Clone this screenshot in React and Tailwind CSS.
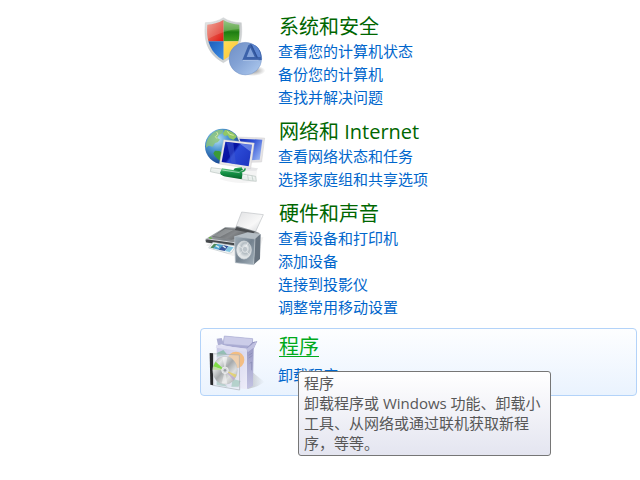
function SecurityIcon() {
  return (
    <svg viewBox="18 15 204 204" className="h-[68px] w-[68px] shrink-0" aria-hidden="true">
      <defs>
        <clipPath id="shield">
          <path d="M82 36 C96 45 113 49 130 50 C133 85 131 129 82 157 C35 129 31 85 34 50 C51 49 68 45 82 36Z" />
        </clipPath>
        <linearGradient id="rim" x2="1" y2="1">
          <stop stopColor="#e6e8e8" />
          <stop offset=".5" stopColor="#c6cacb" />
          <stop offset="1" stopColor="#dfe1e2" />
        </linearGradient>
        <linearGradient id="red" x2="1" y2="1">
          <stop stopColor="#f0a396" />
          <stop offset=".5" stopColor="#e55a4b" />
          <stop offset="1" stopColor="#e01410" />
        </linearGradient>
        <linearGradient id="green" x2="0" y2="1">
          <stop stopColor="#8fc47c" />
          <stop offset=".5" stopColor="#4b9c33" />
          <stop offset=".6" stopColor="#1d7d12" />
          <stop offset="1" stopColor="#45a01f" />
        </linearGradient>
        <linearGradient id="blue" x2="1" y2="1">
          <stop stopColor="#1c58b5" />
          <stop offset="1" stopColor="#3f93ea" />
        </linearGradient>
        <linearGradient id="yellow" x2="1" y2="1">
          <stop stopColor="#ffdc55" />
          <stop offset="1" stopColor="#f9bf35" />
        </linearGradient>
        <linearGradient id="disc" x2="1" y2="1">
          <stop stopColor="#6f8fc6" />
          <stop offset=".45" stopColor="#84a3d5" />
          <stop offset="1" stopColor="#b2cdf1" />
        </linearGradient>
        <radialGradient id="shade">
          <stop stopColor="#555" stopOpacity=".65" />
          <stop offset="1" stopColor="#555" stopOpacity="0" />
        </radialGradient>
      </defs>
      <ellipse cx="170" cy="188" rx="38" ry="16" fill="url(#shade)" />
      <path
        d="M82 29 C97 39 115 44 136 44 C140 87 138 134 82 164 C27 134 24 87 28 44 C49 44 67 39 82 29Z"
        fill="url(#rim)"
        stroke="#bcc0c1"
        strokeWidth="1"
      />
      <g clipPath="url(#shield)">
        <rect x="28" y="30" width="55" height="70" fill="url(#red)" />
        <rect x="83" y="30" width="55" height="70" fill="url(#green)" />
        <rect x="28" y="100" width="55" height="66" fill="url(#blue)" />
        <rect x="83" y="100" width="55" height="66" fill="url(#yellow)" />
        <path d="M28 30H138V62C105 63 67 75 28 98Z" fill="#fff" opacity=".16" />
      </g>
      <circle cx="148" cy="152" r="49" fill="url(#disc)" stroke="#6482b6" strokeWidth="1" />
      <path d="M164 107 C186 112 198 130 197 156 L187 157 L139 156 L157 112Z" fill="#3c62aa" />
      <path d="M166 108 C183 113 193 128 194 147 L184 147Z" fill="#5d86d0" />
      <path d="M163 119L152 147H176Z" fill="#83a3da" />
      <path d="M166 112L184 149" fill="none" stroke="#2f5298" strokeWidth="4" />
      <path d="M141 157H188" fill="none" stroke="#c4d6f2" strokeWidth="2" />
    </svg>
  );
}

function NetworkIcon() {
  return (
    <svg viewBox="18 0 204 204" className="h-[68px] w-[68px] shrink-0" aria-hidden="true">
      <defs>
        <radialGradient id="globe" cx=".35" cy=".3" r=".75">
          <stop stopColor="#b9e2f7" />
          <stop offset=".4" stopColor="#4f98d2" />
          <stop offset="1" stopColor="#0d3a8a" />
        </radialGradient>
        <linearGradient id="screen" x2="1" y2=".6">
          <stop stopColor="#2b49d2" />
          <stop offset=".2" stopColor="#0a17a8" />
          <stop offset=".45" stopColor="#0713a2" />
          <stop offset=".52" stopColor="#2b4ad6" />
          <stop offset="1" stopColor="#2039c4" />
        </linearGradient>
        <linearGradient id="screenBack" x2="1" y2=".6">
          <stop stopColor="#152bb4" />
          <stop offset=".5" stopColor="#2f50d4" />
          <stop offset="1" stopColor="#8ba8f0" />
        </linearGradient>
        <linearGradient id="cable" x2="0" y2="1">
          <stop stopColor="#67c983" />
          <stop offset=".4" stopColor="#159347" />
          <stop offset="1" stopColor="#066329" />
        </linearGradient>
      </defs>
      <path d="M70 183Q130 202 180 190L184 151L145 147Z" fill="#777" opacity=".08" />
      <circle cx="80" cy="85" r="53" fill="url(#globe)" />
      <path d="M45 51C55 36 73 33 82 36L79 46L69 50L64 59L72 65L65 73L57 75L50 86L38 83L30 89C30 72 34 61 45 51Z" fill="#8cc476" opacity=".8" />
      <path d="M87 35C104 38 116 45 123 56L112 65L100 60L95 52L86 54L80 47Z" fill="#91c765" />
      <path d="M57 98L70 99L82 107L91 121L84 136C72 131 57 117 52 106Z" fill="#3b9b36" />
      <path d="M62 42L66 49L58 56L63 62M94 40L101 49L113 52" fill="none" stroke="#d5e8a0" strokeWidth="3" />
      <path d="M124 57L206 60L197 132L157 133Z" fill="#e5e3e5" stroke="#c3c2c6" strokeWidth="1" />
      <path d="M130 62L199 65L191 125L157 127Z" fill="url(#screenBack)" />
      <path d="M139 145L186 151L181 158L145 158Z" fill="#e6e6e8" />
      <path d="M83 65L175 75L164 152L70 138Z" fill="#e9e7e7" stroke="#c1c0c4" strokeWidth="1" />
      <path d="M88 71L168 80L158 145L77 132Z" fill="url(#screen)" />
      <path d="M92 73L112 75L120 139L107 137Z" fill="#4059d0" opacity=".55" />
      <path d="M132 77L168 80L165 102Z" fill="#a9c0fb" opacity=".45" />
      <path d="M116 151L137 147L141 156L126 161L111 158Z" fill="url(#cable)" />
      <path d="M108 162Q148 166 147 151" fill="none" stroke="#299950" strokeWidth="5" />
      <path d="M45 149L79 153L76 168L43 161Z" fill="#e8eeeb" stroke="#b9c4bf" strokeWidth="2" />
      <path d="M134 167L179 175L181 190L139 185Z" fill="#e9eeec" stroke="#b9c4bf" strokeWidth="2" />
      <path d="M78 151L130 159Q140 161 139 171L137 184L91 176Q75 173 72 164Z" fill="url(#cable)" />
      <path d="M79 156L131 164M48 153L72 156M142 172L174 178" stroke="#fff" strokeWidth="3" opacity=".5" />
      <path d="M155 171L157 186M168 173L171 188" stroke="#b7c6bf" strokeWidth="2" />
    </svg>
  );
}

function HardwareIcon() {
  return (
    <svg viewBox="18 0 204 204" className="h-[68px] w-[68px] shrink-0" aria-hidden="true">
      <defs>
        <linearGradient id="paper" x2="1" y2="1">
          <stop stopColor="#dfe0e2" />
          <stop offset=".6" stopColor="#f8f8f8" />
          <stop offset="1" stopColor="#cdd0d3" />
        </linearGradient>
        <linearGradient id="printer" x2="1" y2="1">
          <stop stopColor="#bfc3c6" />
          <stop offset=".5" stopColor="#7f8488" />
          <stop offset="1" stopColor="#d3d5d7" />
        </linearGradient>
        <linearGradient id="lid" x2="1" y2=".4">
          <stop stopColor="#4b4e50" />
          <stop offset=".6" stopColor="#85888b" />
          <stop offset="1" stopColor="#55585b" />
        </linearGradient>
        <linearGradient id="speaker" x2="1" y2="1">
          <stop stopColor="#9fabb5" />
          <stop offset=".5" stopColor="#74828f" />
          <stop offset="1" stopColor="#a6b3bd" />
        </linearGradient>
        <radialGradient id="cone" cx=".6" cy=".4">
          <stop stopColor="#9fa9b0" />
          <stop offset=".25" stopColor="#e9edf0" />
          <stop offset=".6" stopColor="#b4bdc3" />
          <stop offset="1" stopColor="#e1e5e7" />
        </radialGradient>
      </defs>
      <path d="M30 136L110 168L190 153L202 112L65 112Z" fill="#777" opacity=".1" />
      <path d="M137 36L202 44L176 101L116 91Z" fill="url(#paper)" stroke="#c0c3c6" strokeWidth="2" />
      <path d="M88 81L118 83L122 77L178 94L190 99L192 110L110 143L31 127L27 120L34 114Z" fill="url(#printer)" />
      <path d="M86 84L119 87L175 100L106 119L68 113L48 111Z" fill="url(#lid)" />
      <path d="M122 81L177 95L172 100L116 90Z" fill="#4a4d50" />
      <path d="M87 87L50 109L72 111L112 90Z" fill="#b9bcbe" opacity=".45" />
      <path d="M32 116L115 126V141L29 127Z" fill="#44484b" />
      <path d="M29 116L117 128L118 137" fill="none" stroke="#d5d8db" strokeWidth="3" />
      <path d="M39 113L47 115" stroke="#63ba38" strokeWidth="4" />
      <path d="M51 127L119 138L107 158L95 160L38 144Z" fill="#f5f7f8" stroke="#bdc5c9" strokeWidth="2" />
      <path d="M54 131L66 133L53 145L43 143Z" fill="#4d8a5a" />
      <path d="M64 132L83 135L68 149L51 145Z" fill="#4fa5cf" />
      <path d="M81 135L98 139L86 153L68 149Z" fill="#35539b" />
      <path d="M97 139L113 142L101 156L87 153Z" fill="#80c4e0" />
      <path d="M80 137L89 144M59 137L69 142" stroke="#dff1ee" strokeWidth="4" />
      <path d="M116 109L155 97L194 102L177 117Z" fill="#b4bdc4" />
      <path d="M177 117L194 102L192 177L173 194Z" fill="#66727e" />
      <path d="M116 109L177 117L173 194L118 188Z" fill="url(#speaker)" stroke="#b9c3ca" strokeWidth="2" />
      <ellipse cx="144" cy="150" rx="22" ry="27" fill="url(#cone)" stroke="#dce1e4" strokeWidth="2" />
      <ellipse cx="147" cy="148" rx="8" ry="9" fill="#bcc4ca" stroke="#e7eaec" strokeWidth="2" />
      <path d="M128 137L139 145M127 165L139 154M156 128L149 141M160 164L152 155" stroke="#fff" strokeWidth="3" opacity=".5" />
    </svg>
  );
}

function ProgramsIcon() {
  return (
    <svg viewBox="18 33 204 180" className="h-[60px] w-[68px] shrink-0" aria-hidden="true">
      <defs>
        <linearGradient id="front" x2="1" y2="1">
          <stop stopColor="#c6c7e6" />
          <stop offset="1" stopColor="#eeedf9" />
        </linearGradient>
        <linearGradient id="side" x2="0" y2="1">
          <stop stopColor="#9293bf" />
          <stop offset="1" stopColor="#c3c3e2" />
        </linearGradient>
        <linearGradient id="cd" x2="1" y2="1">
          <stop stopColor="#a0a2a4" />
          <stop offset=".25" stopColor="#e4e6e6" />
          <stop offset=".48" stopColor="#a5a9ab" />
          <stop offset=".7" stopColor="#dedfdf" />
          <stop offset="1" stopColor="#a3a6a8" />
        </linearGradient>
        <linearGradient id="boxShadow" x2="1">
          <stop stopColor="#777" stopOpacity=".4" />
          <stop offset="1" stopColor="#777" stopOpacity="0" />
        </linearGradient>
      </defs>
      <path d="M169 150L188 166L206 180L184 193L155 201Z" fill="url(#boxShadow)" />
      <path d="M85 42L170 50L173 78L152 84L79 69Z" fill="#a9aad2" />
      <path d="M85 42L170 50L169 73L82 66Z" fill="#cbcce8" stroke="#aeb0d4" strokeWidth="2" />
      <path d="M62 50L77 48L84 66L66 70Z" fill="#adafd4" />
      <path d="M152 79L169 61L184 57L173 80L171 191L153 201Z" fill="url(#side)" />
      <path d="M62 69L152 80L153 202L62 190Z" fill="url(#front)" />
      <path d="M62 69L152 80L147 89L59 77Z" fill="#dfdff2" />
      <path d="M152 80L172 64L183 58L175 76L155 91Z" fill="#bfc0e0" />
      <path d="M158 100L169 93M158 108L169 101M161 124L167 120V145" fill="none" stroke="#8486b2" strokeWidth="2" />
      <circle cx="120" cy="114" r="25" fill="#f3bd82" />
      <path d="M64 92L82 84L94 98L62 104ZM110 170L133 177L128 194H106Z" fill="#8cbcae" opacity=".9" />
      <path d="M62 160L78 180L95 194L62 189Z" fill="#8cbcae" opacity=".8" />
      <path d="M48 95L130 99L131 204L51 190Z" fill="#e7eaf1" opacity=".4" />
      <path d="M48 95L130 99L131 204L51 190Z" fill="none" stroke="#a9afb6" strokeWidth="2" />
      <path d="M41 93L51 94V190L43 188Z" fill="#27282b" />
      <path d="M53 94V190" stroke="#c9cbd0" strokeWidth="3" />
      <ellipse cx="87" cy="145" rx="37" ry="42" fill="url(#cd)" stroke="#b0b4b6" strokeWidth="1" />
      <path d="M87 145L59 119L51 134Z" fill="#7fdc45" />
      <path d="M87 145L52 133L51 143Z" fill="#c3dda6" />
      <path d="M87 145L122 158L117 167Z" fill="#e4d063" opacity=".8" />
      <path d="M87 145L117 168L112 175Z" fill="#b9a4cf" opacity=".7" />
      <path d="M87 145L79 105L94 105Z" fill="#fff" opacity=".5" />
      <path d="M87 145L94 186L77 184Z" fill="#fff" opacity=".45" />
      <circle cx="87" cy="145" r="10" fill="#d8dadd" stroke="#f5f5f5" strokeWidth="2" />
      <circle cx="87" cy="145" r="4" fill="#9a9fa3" />
    </svg>
  );
}

const categories = [
  {
    title: "系统和安全",
    icon: SecurityIcon,
    links: ["查看您的计算机状态", "备份您的计算机", "查找并解决问题"],
  },
  {
    title: "网络和 Internet",
    icon: NetworkIcon,
    links: ["查看网络状态和任务", "选择家庭组和共享选项"],
  },
  {
    title: "硬件和声音",
    icon: HardwareIcon,
    links: ["查看设备和打印机", "添加设备", "连接到投影仪", "调整常用移动设置"],
  },
];

function LinkList({ links }) {
  return (
    <ul>
      {links.map((link) => (
        <li key={link}>
          <a href="#" className="block text-[15px] leading-[23px] text-[#0066cc] hover:underline">
            {link}
          </a>
        </li>
      ))}
    </ul>
  );
}

function Category({ title, icon: Icon, links }) {
  return (
    <section className="flex gap-2 pl-0.5">
      <Icon />
      <div>
        <h2 className="pl-px text-xl leading-[27px] text-[#006600]">
          <a href="#" className="block">{title}</a>
        </h2>
        <LinkList links={links} />
      </div>
    </section>
  );
}

export default function App() {
  return (
    <main
      lang="zh-CN"
      className="flex min-h-screen flex-col gap-[9px] bg-white pt-[13px] pr-[3px] pl-[200px] font-['Open_Sans','Noto_Sans_CJK_SC',sans-serif]"
    >
      {categories.map((category) => (
        <Category key={category.title} {...category} />
      ))}

      <section className="relative flex gap-2 rounded-sm border border-[#b3d3f9] bg-linear-to-b from-[#fdfeff] to-[#eaf3fe] pt-1 pb-0.5 pl-px">
        <ProgramsIcon />
        <div className="flex flex-col items-start gap-1">
          <h2 className="pl-px text-xl leading-[27px] text-[#00aa1c]">
            <a href="#" aria-describedby="programs-tip" className="block underline decoration-1 underline-offset-2">
              程序
            </a>
          </h2>
          <LinkList links={["卸载程序"]} />
        </div>
        <div
          id="programs-tip"
          role="tooltip"
          className="absolute top-[42px] left-[97px] w-[253px] rounded-[3px] border border-[#767676] bg-linear-to-b from-white to-[#e4e5f0] pt-px pr-1 pb-0.5 pl-[5px] text-[15px] leading-5 text-[#575757]"
        >
          <p>程序</p>
          <p>卸载程序或 Windows 功能、卸载小工具、从网络或通过联机获取新程序，等等。</p>
        </div>
      </section>
    </main>
  );
}
